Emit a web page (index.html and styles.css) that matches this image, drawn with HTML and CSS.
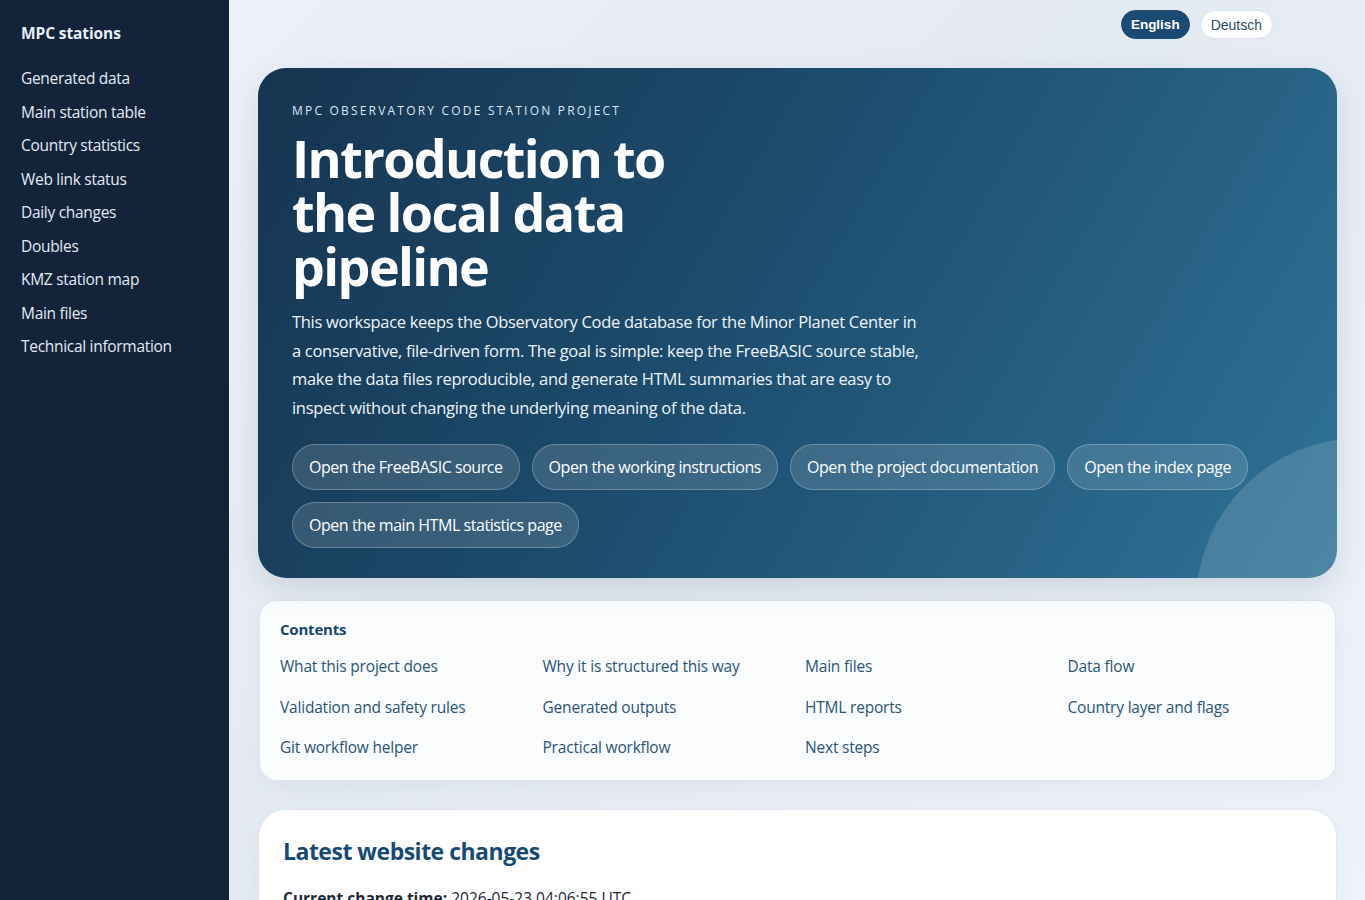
FILE: index.html
```html
<!DOCTYPE html>
<html lang="en">
<head>
<meta charset="utf-8">
<title>Introduction to the local data pipeline</title>
<link rel="stylesheet" href="styles.css">
</head>
<body>
<div class="layout">
  <aside class="sidebar">
    <div class="brand">MPC stations</div>
    <nav class="side-nav">
      <a href="#">Generated data</a>
      <a href="#">Main station table</a>
      <a href="#">Country statistics</a>
      <a href="#">Web link status</a>
      <a href="#">Daily changes</a>
      <a href="#">Doubles</a>
      <a href="#">KMZ station map</a>
      <a href="#">Main files</a>
      <a href="#">Technical information</a>
    </nav>
  </aside>
  <main class="main">
    <div class="lang-bar">
      <button class="lang lang-active">English</button>
      <button class="lang">Deutsch</button>
    </div>
    <section class="hero">
      <div class="hero-circle"></div>
      <div class="eyebrow">MPC OBSERVATORY CODE STATION PROJECT</div>
      <h1 class="hero-title">Introduction to the local data pipeline</h1>
      <p class="hero-text">This workspace keeps the Observatory Code database for the Minor Planet Center in a conservative, file-driven form. The goal is simple: keep the FreeBASIC source stable, make the data files reproducible, and generate HTML summaries that are easy to inspect without changing the underlying meaning of the data.</p>
      <div class="hero-actions">
        <a class="pill" href="#">Open the FreeBASIC source</a>
        <a class="pill" href="#">Open the working instructions</a>
        <a class="pill" href="#">Open the project documentation</a>
        <a class="pill" href="#">Open the index page</a>
        <a class="pill" href="#">Open the main HTML statistics page</a>
      </div>
    </section>
    <section class="toc">
      <div class="toc-title">Contents</div>
      <div class="toc-grid">
        <a href="#">What this project does</a>
        <a href="#">Why it is structured this way</a>
        <a href="#">Main files</a>
        <a href="#">Data flow</a>
        <a href="#">Validation and safety rules</a>
        <a href="#">Generated outputs</a>
        <a href="#">HTML reports</a>
        <a href="#">Country layer and flags</a>
        <a href="#">Git workflow helper</a>
        <a href="#">Practical workflow</a>
        <a href="#">Next steps</a>
      </div>
    </section>
    <section class="card">
      <h2 class="card-title">Latest website changes</h2>
      <p class="meta"><strong>Current change time:</strong> 2026-05-23 04:06:55 UTC</p>
      <p class="meta">The generated pages were refreshed from the current data files.</p>
    </section>
  </main>
</div>
</body>
</html>
```

FILE: styles.css
```css
* { box-sizing: border-box; }

html, body {
  margin: 0;
  height: 100%;
}

body {
  font-family: "Open Sans", "Noto Sans", sans-serif;
  color: #1c2b3a;
  background: linear-gradient(135deg, #eef2f8 0%, #e4eaf2 50%, #eef3fa 100%);
  overflow: hidden;
}

.layout {
  display: flex;
  min-height: 100vh;
}

/* left navigation column */
.sidebar {
  width: 229px;
  flex: 0 0 229px;
  background: #12233a;
  padding: 22px 21px;
  color: #e8eef6;
}

.brand {
  font-weight: 700;
  font-size: 15.5px;
  letter-spacing: -0.1px;
  margin-bottom: 18px;
}

.side-nav {
  display: flex;
  flex-direction: column;
}

.side-nav a {
  color: #e3eaf3;
  text-decoration: none;
  font-size: 15.5px;
  letter-spacing: -0.3px;
  line-height: 33.5px;
}

/* content column */
.main {
  flex: 1;
  padding: 10px 28px 0 29px;
  display: flex;
  flex-direction: column;
}

.lang-bar {
  display: flex;
  justify-content: flex-end;
  gap: 10px;
  padding-right: 64px;
  height: 58px;
}

.lang {
  font-family: "Liberation Sans", Arial, sans-serif;
  font-size: 14px;
  height: 29px;
  padding: 0 10px;
  border-radius: 15px;
  border: 1px solid #d8e0ea;
  background: #ffffff;
  color: #2b4d6b;
}

.lang-active {
  font-size: 13.5px;
  padding: 0 9px;
  background: #1b4a72;
  border-color: #1b4a72;
  color: #ffffff;
  font-weight: 700;
}

.hero {
  position: relative;
  overflow: hidden;
  border-radius: 28px;
  padding: 34px 34px 30px;
  color: #ffffff;
  background: linear-gradient(120deg, #163450 0%, #1d4d6e 45%, #2f7398 100%);
  box-shadow: 0 12px 30px rgba(20, 45, 75, 0.12);
}

.hero-circle {
  position: absolute;
  width: 330px;
  height: 330px;
  border-radius: 50%;
  left: 938px;
  top: 370px;
  background: rgba(255, 255, 255, 0.14);
}

.eyebrow {
  position: relative;
  font-size: 12px;
  letter-spacing: 2.2px;
  color: #dbe7f2;
  margin-bottom: 12px;
}

.hero-title {
  position: relative;
  margin: 0;
  font-size: 52px;
  line-height: 54px;
  font-weight: 700;
  letter-spacing: -1.6px;
  max-width: 420px;
}

.hero-text {
  position: relative;
  margin: 15px 0 22px;
  max-width: 632px;
  font-size: 16.5px;
  line-height: 28.5px;
  letter-spacing: -0.3px;
  color: #eef4f9;
}

.hero-actions {
  position: relative;
  display: flex;
  flex-wrap: wrap;
  gap: 12px 12px;
}

.pill {
  display: inline-flex;
  align-items: center;
  height: 46px;
  padding: 0 16px;
  border-radius: 23px;
  border: 1px solid rgba(255, 255, 255, 0.25);
  background: rgba(255, 255, 255, 0.13);
  color: #ffffff;
  text-decoration: none;
  font-size: 16px;
  letter-spacing: -0.45px;
}

/* table of contents */
.toc {
  margin-top: 22px;
  margin-left: 1px;
  margin-right: 1px;
  background: #fbfcfe;
  border: 1px solid #dfe6ee;
  border-radius: 18px;
  padding: 18px 20px 12px;
  box-shadow: 0 6px 18px rgba(30, 55, 90, 0.05);
}

.toc-title {
  font-weight: 700;
  font-size: 15px;
  color: #17466c;
  letter-spacing: -0.2px;
  margin-bottom: 7px;
}

.toc-grid {
  display: grid;
  grid-template-columns: repeat(4, 1fr);
  column-gap: 15px;
}

.toc-grid a {
  color: #2b5576;
  text-decoration: none;
  font-size: 15.5px;
  letter-spacing: -0.2px;
  line-height: 40.5px;
}

/* change log card */
.card {
  margin-top: 28px;
  background: #ffffff;
  border: 1px solid #dfe6ee;
  border-radius: 28px;
  padding: 25px 24px;
  box-shadow: 0 6px 18px rgba(30, 55, 90, 0.05);
}

.card-title {
  margin: 0 0 20px;
  font-size: 23px;
  font-weight: 700;
  color: #174a72;
  letter-spacing: -0.5px;
}

.meta {
  margin: 0 0 10px;
  font-size: 15.5px;
  color: #1d2935;
}
```
